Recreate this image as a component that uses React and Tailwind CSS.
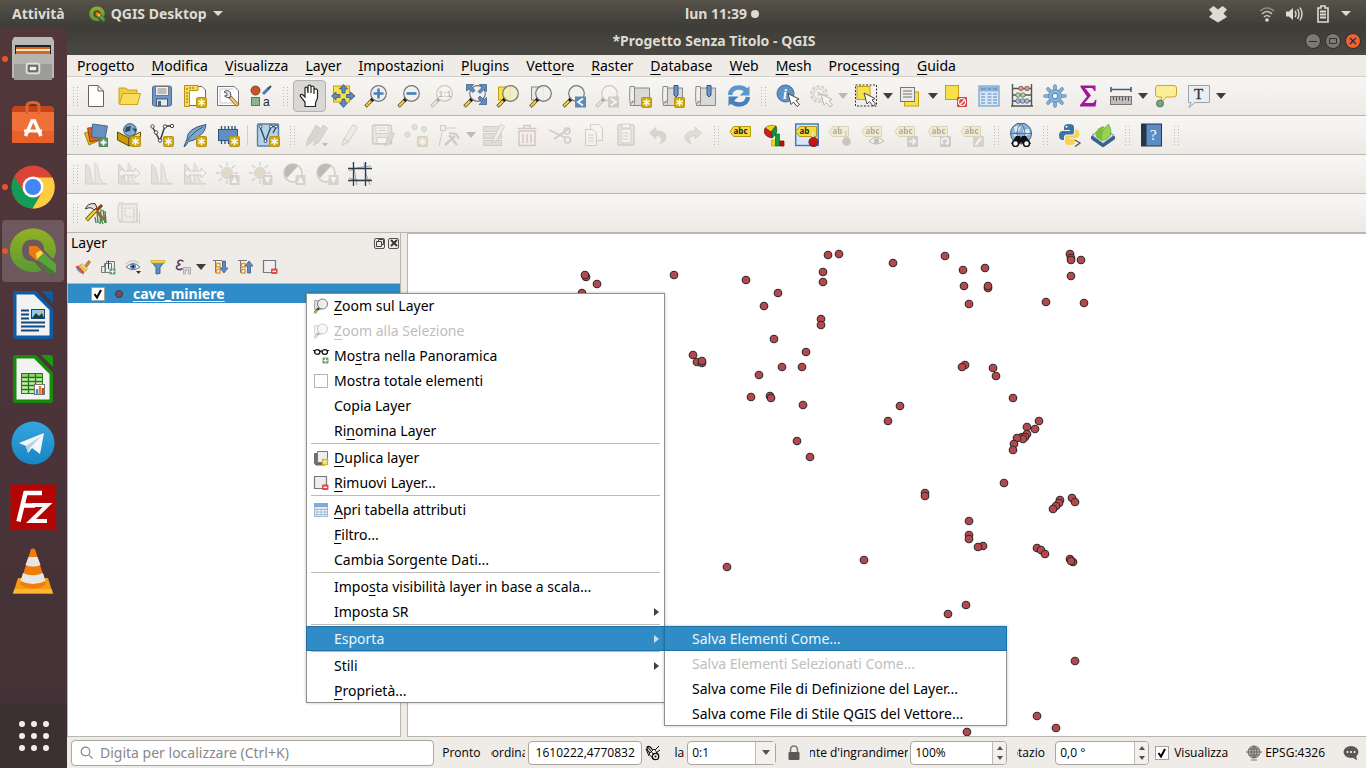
import React from "react";

/* ---------- shared pieces ---------- */

// "&" marks the mnemonic letter that follows it
function Mnemonic({ text }) {
  const i = text.indexOf("&");
  if (i < 0) return <span>{text}</span>;
  return (
    <span>
      {text.slice(0, i)}
      <span className="underline decoration-1 underline-offset-3">{text[i + 1]}</span>
      {text.slice(i + 2)}
    </span>
  );
}

function Svg({ children, className = "size-6", box = "0 0 24 24" }) {
  return (
    <svg viewBox={box} className={className} fill="none" aria-hidden="true">
      {children}
    </svg>
  );
}

const NewBadge = () => (
  <g>
    <rect x="13.500" y="13.500" width="10" height="10" rx="1" fill="#cfa914" stroke="#bb960c" />
    <path d="M18.500 14.800v7.400M15.300 16.600l6.400 3.800M21.700 16.600l-6.400 3.800" stroke="#fffbe6" strokeWidth="1.500" />
  </g>
);

const Lens = ({ fill = "#eef0f0", children }) => (
  <g>
    <path d="M8.500 15.500 1.500 22.500" stroke="#5a4a10" strokeWidth="3.400" />
    <path d="M7 17 2 22" stroke="#f7cf46" strokeWidth="2" />
    <path d="M9.500 14.500 7.500 16.500" stroke="#111" strokeWidth="3.400" />
    <circle cx="14.500" cy="9.500" r="7.800" fill={fill} fillOpacity=".9" stroke="#777" strokeWidth="1.200" />
    {children}
  </g>
);

const Cursor = ({ x = 0, y = 0 }) => (
  <path
    transform={`translate(${x} ${y})`}
    d="M0 0 3 11 5.500 8.500 9 13 11.500 11 8 7 11 5.500Z"
    fill="#fff"
    stroke="#444"
    strokeWidth="1"
  />
);

const Tag = ({ text = "abc", short }) => (
  <g>
    <path d={short ? "M1 8.500 4.500 3.500H20.500V13.500H4.500Z" : "M1 8.500 4.500 3.500H21.500V13.500H4.500Z"} fill="#f5dc3c" stroke="#b79a12" />
    <text x="4.500" y="11.300" fontSize="8" fontWeight="700" fontFamily="Open Sans, sans-serif" fill="#222">
      {text}
    </text>
  </g>
);

const Histogram = ({ arrows }) => (
  <g>
    <path d="M1.500 22V2Q6 3 7 13T12 22Z" fill="#bbb" stroke="#999" />
    <path d="M11 22V1Q14 2 15 12T23 22Z" fill="#ccc" stroke="#999" />
    {arrows && <path d="M1 11l5-5v3h12V6l5 5-5 5v-3H6v3Z" fill="#eee" stroke="#888" />}
  </g>
);

const UpDown = ({ down }) => (
  <g>
    <rect x="13.500" y="13" width="10" height="10" rx="1" fill="#999" />
    <path d={down ? "M18.500 21.500 15.500 15h6Z" : "M18.500 14.500 15.500 21h6Z"} fill="#fff" />
  </g>
);

const Scroll = () => (
  <g>
    <path d="M6 4h15.500v17.500H4Z" fill="#d9d9d9" stroke="#8a8a8a" />
    <path d="M2 2.500H6.500V17Q2.500 17 2.500 21.500 1 15 2 2.500ZM2.500 21.500H6L6.500 17" fill="#efefef" stroke="#8a8a8a" />
  </g>
);

const Sun = () => (
  <g>
    <path d="M11 0v4M11 18v4M0 11h4M18 11h4M3 3l3 3M16 16l3 3M19 3l-3 3M3 19l3-3" stroke="#999" strokeWidth="1.500" />
    <circle cx="11" cy="11" r="5.500" fill="#c9a860" stroke="#999" />
  </g>
);

const ic = {
  newDoc: (
    <path d="M4.500 1.500H14l5.500 5.500V22.500H4.500ZM14 1.500V7h5.500" fill="#fff" stroke="#666" />
  ),
  open: (
    <g stroke="#c9a51c">
      <path d="M2 20V4h7l2 2h9v4" fill="#f0cc45" />
      <path d="M2.500 20.500 5.500 9.500H23.500L20.500 20.500Z" fill="#f9dc5c" />
    </g>
  ),
  save: (
    <g>
      <rect x="2.500" y="2" width="19" height="20" rx="2" fill="#6d97c6" stroke="#4a6c95" />
      <rect x="5.500" y="2.500" width="13" height="9" fill="#f1f1f1" stroke="#777" />
      <path d="M7.500 5h9M7.500 7h9M7.500 9h9" stroke="#888" />
      <rect x="6.500" y="15" width="11" height="7" fill="#e9e9e9" stroke="#555" />
      <rect x="8" y="17" width="3" height="5" fill="#3f6595" />
    </g>
  ),
  newLayout: (
    <g>
      <path d="M6.500 2.500H19l3.500 3.500V21.500H6.500Z" fill="#fff" stroke="#666" />
      <path d="M1.500 1.500H15v5H6.500V22.500H1.500Z" fill="#f7dc5a" stroke="#b79414" />
      <path d="M4 4v2M7 3v2M10 3v2M3 9h2M3 12h2M3 15h2M3 18h2" stroke="#8a6d0a" />
      <NewBadge />
    </g>
  ),
  layoutMgr: (
    <g>
      <path d="M1.500 2.500H18l4.500 4V21.500H1.500Z" fill="#fff" stroke="#777" />
      <path d="M4 5h13M4 5v14h14" stroke="#b9c9d8" />
      <path d="M14 13 22 21.500" stroke="#8d6c22" strokeWidth="4" />
      <path d="M14.500 13.500 21.500 21" stroke="#f0c968" strokeWidth="2.400" />
      <path d="M8 8Q11 5 14.500 8.500 15.500 11 14 13.500 11 14.500 8.500 12L11 11.500 11 9.500Z" fill="#e5e5e5" stroke="#555" />
    </g>
  ),
  style: (
    <g>
      <circle cx="6.500" cy="6.500" r="4.500" fill="#c9562b" stroke="#8c3c1e" />
      <path d="M14 10 20 4" stroke="#4a7cae" strokeWidth="3" />
      <path d="M19 5 22 2" stroke="#2f4e6e" strokeWidth="2" />
      <rect x="2.500" y="13.500" width="8" height="8" fill="#8cb58b" stroke="#557f55" />
      <text x="14" y="22" fontSize="12" fontFamily="Liberation Sans, sans-serif" fill="#222">a</text>
    </g>
  ),
  hand: (
    <path
      d="M7 22.500V18L2.500 12.500Q1.500 10 4.500 10.500L7 13V4Q7.500 2 9.500 4L10 9V2Q11.500 0 13 2V9 3Q14.500 1 16 3V10 5.500Q18 4 19.500 6V14L17.500 19V22.500Z"
      fill="#fff"
      stroke="#222"
      strokeWidth="1.200"
    />
  ),
  panSel: (
    <g>
      <rect x="2.500" y="2" width="16" height="16" fill="#f8e04c" stroke="#c2a20e" />
      <g fill="#5d8cc0" stroke="#33577f" strokeWidth=".8">
        <path d="M12.500 0.500 16.500 5H14V9H11V5H8.500Z" />
        <path d="M12.500 23.500 16.500 19H14V15H11V19H8.500Z" />
        <path d="M0.500 12 5 8V10.500H9V13.500H5V16Z" />
        <path d="M24 12 19.500 8V10.500H15.500V13.500H19.500V16Z" />
      </g>
    </g>
  ),
  zoomIn: (
    <Lens>
      <path d="M14.500 4.500v10M9.500 9.500h10" stroke="#4a80b8" strokeWidth="2.600" />
    </Lens>
  ),
  zoomOut: (
    <Lens>
      <path d="M9.500 9.500h10" stroke="#4a80b8" strokeWidth="2.600" />
    </Lens>
  ),
  zoom11: (
    <Lens>
      <text x="8.500" y="13" fontSize="9" fontWeight="700" fontFamily="Liberation Sans, sans-serif" fill="#555">1:1</text>
    </Lens>
  ),
  zoomFull: (
    <g>
      <Lens />
      <path d="M3.500 0.500h7L8.500 2.500 12 6.500 10 8.500 6 5 3.500 7ZM23.500 0.500v7l-2.500-2-4 4-2-2 4-4-2.500-3ZM23.500 20.500h-7.500l2.500-2L15 14l2-2 4 4 2.500-2.500Z" fill="#5d8cc0" stroke="#33577f" strokeWidth=".7" />
    </g>
  ),
  zoomSel: (
    <g>
      <rect x="2.500" y="3" width="12" height="13" fill="#f8e04c" stroke="#c2a20e" />
      <Lens fill="#f1ecc4" />
    </g>
  ),
  zoomLayer: (
    <g>
      <rect x="2.500" y="3" width="12" height="13" fill="#e9e9e9" stroke="#888" />
      <Lens />
    </g>
  ),
  zoomLast: (
    <g>
      <Lens />
      <rect x="13" y="12.500" width="11" height="11" fill="#5c88b9" />
      <path d="M21 14.500 16 18l5 3.500" stroke="#fff" strokeWidth="1.800" />
    </g>
  ),
  zoomNext: (
    <g>
      <Lens />
      <rect x="13" y="12.500" width="11" height="11" fill="#888" />
      <path d="M16 14.500 21 18l-5 3.500" stroke="#fff" strokeWidth="1.800" />
    </g>
  ),
  newMap: (<g><Scroll /><NewBadge /></g>),
  newBookmark: (
    <g><Scroll /><path d="M13 1.500h4V11l-2 2-2-2Z" fill="#6b98c8" stroke="#2f5478" /><NewBadge /></g>
  ),
  bookmarks: (
    <g><Scroll /><path d="M13 1.500h4V11l-2 2-2-2Z" fill="#6b98c8" stroke="#2f5478" /></g>
  ),
  refresh: (
    <g>
      <path d="M3 11Q4 3.500 12 3.500 17 3.500 19.500 7" stroke="#5b96cc" strokeWidth="4.500" />
      <path d="M22.500 2V11.500H12.500Z" fill="#5b96cc" />
      <path d="M21 13Q20 20.500 12 20.500 7 20.500 4.500 17" stroke="#4482bb" strokeWidth="4.500" />
      <path d="M1.500 22V12.500H11.500Z" fill="#4482bb" />
    </g>
  ),
  identify: (
    <g>
      <circle cx="9.500" cy="9.500" r="8.500" fill="#5e93c8" stroke="#3f6f9f" />
      <text x="7" y="14.500" fontSize="14" fontStyle="italic" fontWeight="700" fontFamily="Liberation Serif, serif" fill="#fff">i</text>
      <Cursor x={12} y={9.500} />
    </g>
  ),
  action: (
    <g>
      <circle cx="10" cy="10" r="8" fill="#ccc" stroke="#888" strokeWidth="2" strokeDasharray="3 2" />
      <circle cx="10" cy="10" r="5" fill="#eee" stroke="#888" />
      <path d="M8.500 7v6l5-3Z" fill="#888" />
      <Cursor x={12} y={10} />
    </g>
  ),
  select: (
    <g>
      <rect x="1.500" y="1" width="21" height="21" stroke="#333" strokeDasharray="2 1.500" fill="none" />
      <rect x="3" y="2.500" width="13" height="13" fill="#f8e04c" stroke="#c2a20e" />
      <Cursor x={10} y={9} />
    </g>
  ),
  selectValue: (
    <g>
      <rect x="5.500" y="8" width="14" height="14" fill="#f8e04c" stroke="#c2a20e" />
      <rect x="1.500" y="3.500" width="14" height="14" fill="#ecebea" stroke="#777" />
      <path d="M4 7h9M4 10h9M4 13h9" stroke="#777" strokeWidth="1.200" />
    </g>
  ),
  deselect: (
    <g>
      <rect x="1.500" y="1.500" width="13" height="14" fill="#f8e04c" stroke="#c2a20e" />
      <rect x="13" y="13" width="10" height="10" rx="1" fill="#dd4340" />
      <circle cx="18" cy="18" r="3.500" stroke="#fff" strokeWidth="1.200" />
      <path d="M16 20.500 20.500 16" stroke="#fff" strokeWidth="1.200" />
    </g>
  ),
  table: (
    <g>
      <rect x="2" y="2" width="20" height="20" fill="#d8e8f6" stroke="#5e8fbf" />
      <rect x="2.500" y="2.500" width="19" height="5" fill="#8cb6dd" />
      <path d="M4 5h5M11 5h3M16 5h4M4 10h4M10.500 10h4M16 10h4M4 13h4M10.500 13h4M16 13h4M4 16h4M10.500 16h4M16 16h4M4 19h4M10.500 19h4M16 19h4" stroke="#5585b5" strokeWidth="1.200" />
    </g>
  ),
  abacus: (
    <g>
      <path d="M2.500 0v22M21.500 0v22M1 22h22M2 4.500h20M2 11h20M2 17h20" stroke="#555" strokeWidth="1.400" />
      <g stroke="#555" strokeWidth=".7">
        <circle cx="11" cy="4.500" r="2.300" fill="#ec8b86" /><circle cx="17" cy="4.500" r="2.300" fill="#ec8b86" />
        <circle cx="8" cy="11" r="2.300" fill="#a9d89c" /><circle cx="13" cy="11" r="2.300" fill="#a9d89c" />
        <circle cx="8" cy="17" r="2.300" fill="#9cc5e8" /><circle cx="12.500" cy="17" r="2.300" fill="#9cc5e8" /><circle cx="17" cy="17" r="2.300" fill="#9cc5e8" />
      </g>
    </g>
  ),
  gear: (
    <g>
      <path d="M12 2v20M2 12h20M5 5l14 14M19 5 5 19" stroke="#5b8fc0" strokeWidth="3.600" strokeLinecap="round" />
      <path d="M12 2v20M2 12h20M5 5l14 14M19 5 5 19" stroke="#84b2db" strokeWidth="2" strokeLinecap="round" />
      <circle cx="12" cy="12" r="6.500" fill="#84b2db" stroke="#5b8fc0" strokeWidth=".8" />
      <circle cx="12" cy="12" r="2.800" fill="#f3f1ee" stroke="#4b7eae" />
    </g>
  ),
  sigma: (
    <path d="M4.500 1.500H19.500V7H18Q17.500 4 15 4H9l6 7.500L8.500 19H16Q18.500 19 19 16h1.500L19.500 22.500H4V21L11 12.500 4.500 3Z" fill="#a5129c" />
  ),
  ruler: (
    <g>
      <path d="M2 5.500H22M2 3v5M22 3v5" stroke="#345f80" strokeWidth="1.600" />
      <rect x="1.500" y="12.500" width="21" height="8" fill="#bcbcbc" stroke="#777" />
      <path d="M4.500 13v3M7.500 13v4M10.500 13v3M13.500 13v4M16.500 13v3M19.500 13v4" stroke="#555" />
    </g>
  ),
  mapTip: (
    <g>
      <path d="M4 1.500H20Q22.500 1.500 22.500 4V10Q22.500 13 20 13H12L7 19 7.500 13H4Q1.500 13 1.500 10V4Q1.500 1.500 4 1.500Z" fill="#fcee97" stroke="#c9a82e" />
      <circle cx="6" cy="19.500" r="3.500" fill="#7fa382" stroke="#55765a" />
    </g>
  ),
  textNote: (
    <g>
      <path d="M1.500 1.500H22.500V18.500H8L2 23.500 4 18.500H1.500Z" fill="#e8eef2" stroke="#9aa3aa" />
      <text x="7" y="15" fontSize="15" fontFamily="Liberation Serif, serif" fill="#333" stroke="#333" strokeWidth=".3">T</text>
    </g>
  ),
  dataSource: (
    <g strokeWidth=".8">
      <path d="M0.500 10 10 7l4 11-9 4Z" fill="#e8b520" stroke="#8f6c05" />
      <path d="M3.500 5 15 4l1 13-10 2Z" fill="#d9631d" stroke="#843608" />
      <path d="M8.500 1 23.500 3 21 16 7.500 14Z" fill="#6690c0" stroke="#37597f" />
      <rect x="15" y="15" width="9" height="9" rx="1" fill="#5b9461" stroke="#457a4b" />
      <path d="M19.500 16.500v6M16.500 19.500h6" stroke="#fff" strokeWidth="1.800" />
    </g>
  ),
  box: (
    <g>
      <circle cx="13" cy="7" r="6.300" fill="#86aacd" stroke="#2f4f72" />
      <path d="M9 4l5-1-1 5-5 1ZM15 5l4 1v4Z" fill="#24486e" />
      <path d="M0.500 9 12 15V23L0.500 17Z" fill="#c79c05" stroke="#5f4a00" />
      <path d="M12 15 23.500 9V17L12 23Z" fill="#f7e06a" stroke="#5f4a00" />
      <NewBadge />
    </g>
  ),
  shape: (
    <g>
      <path d="M2 3 10 18 15 3H22" stroke="#333" strokeWidth="1.400" />
      <g fill="#fff" stroke="#444">
        <circle cx="2.500" cy="3.500" r="1.700" /><circle cx="6" cy="9.500" r="1.700" /><circle cx="10" cy="17.500" r="1.700" /><circle cx="15" cy="3.500" r="1.700" /><circle cx="22" cy="3" r="1.700" />
      </g>
      <NewBadge />
    </g>
  ),
  feather: (
    <g>
      <path d="M1 23.500 4 16Q4 5 23 1.500 22 9 17.500 12 12 18 5.500 18.500L2 23.500Z" fill="#7da6cd" stroke="#35597c" />
      <path d="M4.500 17.500Q10 9 20 4" stroke="#35597c" />
      <NewBadge />
    </g>
  ),
  chip: (
    <g>
      <path d="M5.500 3v18M9 3v18M12.500 3v18M16 3v18M19 3v18" stroke="#2f4d6e" strokeWidth="1.300" />
      <rect x="2.500" y="6.500" width="19" height="11" fill="#5f8fc3" stroke="#2e5580" />
      <NewBadge />
    </g>
  ),
  virtual: (
    <g>
      <rect x="1.500" y="1" width="21" height="22" rx="1" fill="#b7d2e8" stroke="#5d7f9e" strokeWidth="1.400" />
      <path d="M4 3.500 9.500 18.500 15 3.500H20.500L17 10" stroke="#2c4c6c" strokeWidth="1.400" />
      <g fill="#fff" stroke="#2c4c6c"><circle cx="4.500" cy="3.500" r="1.500" /><circle cx="9.500" cy="18" r="1.500" /><circle cx="15" cy="3.500" r="1.500" /><circle cx="20" cy="3.500" r="1.500" /></g>
      <NewBadge />
    </g>
  ),
  pencils: (
    <g>
      <path d="M1.500 22.500 3 16 11 2 15 5 7 19Z" fill="#a99" stroke="#888" />
      <path d="M8.500 22.500 10 16 18 2 22.500 5 14 19Z" fill="#a8a4a0" stroke="#888" />
      <path d="M17 20h6l-3 3.500Z" fill="#555" />
    </g>
  ),
  pencil: (
    <path d="M4 22.500 6 16 15 1.500 19.500 4.500 10.500 19ZM6 16l4.500 3" fill="#ddd8d0" stroke="#888" />
  ),
  saveEdits: (
    <g>
      <rect x="1.500" y="2" width="19" height="19" rx="2" fill="#ccc" stroke="#888" strokeWidth="1.500" />
      <rect x="5" y="2.500" width="12" height="8" fill="#f4f4f4" stroke="#888" />
      <rect x="6" y="14.500" width="10" height="6" fill="#f4f4f4" stroke="#888" />
      <path d="M7 5h8M7 7.500h8" stroke="#888" />
      <path d="M14 23 15 19 20 9 23.500 11 18 21Z" fill="#b7a7a4" stroke="#888" />
    </g>
  ),
  addPoint: (
    <g>
      <g fill="#bbb" stroke="#888"><circle cx="3.500" cy="11.500" r="2.500" /><circle cx="10.500" cy="4" r="2.500" /><circle cx="20" cy="6" r="2.500" /></g>
      <NewBadge />
    </g>
  ),
  vertex: (
    <g stroke="#888">
      <path d="M2 23 6 5H19" />
      <rect x="3.500" y="2.500" width="5" height="5" fill="#ddd" />
      <path d="M8 22 18 13M12 12 20 22" strokeWidth="2.500" />
      <path d="M12 10l7 1 3 5" strokeWidth="2" />
    </g>
  ),
  multiEdit: (
    <g>
      <path d="M1.500 3.500h18v5h-18ZM1.500 10.500h18v5h-18ZM1.500 17.500h18v5h-18Z" fill="#b9b7ac" stroke="#888" />
      <path d="M10 20 12 14 19 1 22.500 3.500 15 17Z" fill="#ddd" stroke="#888" />
    </g>
  ),
  trash: (
    <g stroke="#a97070" strokeWidth="1.500">
      <path d="M4 8h16v14.500H4ZM2.500 5.500h19M9 5V2.500h6V5" />
      <path d="M8 11v9M12 11v9M16 11v9" />
    </g>
  ),
  cut: (
    <g stroke="#888" strokeWidth="1.600">
      <path d="M1 7 17 14.500M6 16 22 5" /><circle cx="19" cy="8" r="3" /><circle cx="19.500" cy="17" r="3" />
    </g>
  ),
  copy: (
    <g fill="#eee" stroke="#888">
      <path d="M9.500 1.500H18l3.500 3.500V17.500H9.500Z" />
      <path d="M4.500 6.500H12l3.500 3.500V22.500H4.500ZM7 12h6M7 15h6M7 18h6" />
    </g>
  ),
  paste: (
    <g fill="#eee" stroke="#888">
      <rect x="4" y="2" width="16" height="20" rx="1" fill="#ccc" strokeWidth="1.400" />
      <path d="M7 6h10v14H7ZM8.500 10h6M8.500 13h6M8.500 16h6" />
      <rect x="8" y="1" width="8" height="4" />
    </g>
  ),
  undo: (
    <path d="M2.500 10 9 4V8Q18 7.500 19 13.500 19 19 13 20.500 16 16 13.500 14 11.500 12.500 9 12.500V16Z" fill="#b3948e" stroke="#999" />
  ),
  redo: (
    <path d="M21.500 10 15 4V8Q6 7.500 5 13.500 5 19 11 20.500 8 16 10.500 14 12.500 12.500 15 12.500V16Z" fill="#a9b3a3" stroke="#999" />
  ),
  label: <Tag />,
  pie: (
    <g strokeWidth=".7">
      <path d="M9 9 3 5Q7 1 14 3Z" fill="#f7d20f" stroke="#8c6e00" />
      <path d="M9 9 14 3Q17 10 10 15Z" fill="#1d8c3c" stroke="#0d4e1e" />
      <path d="M9 9 10 15Q0 13 3 5Z" fill="#d32020" stroke="#701010" />
      <path d="M9.500 17h4v6h-4Z" fill="#f7d20f" stroke="#c93" /><path d="M13.500 11h4v12h-4Z" fill="#0b9c38" stroke="#064" /><path d="M18 18h4v5h-4Z" fill="#c01414" stroke="#600" />
    </g>
  ),
  pinLabel: (
    <g>
      <rect x="0.700" y="1" width="22.500" height="21.500" fill="#d7e5f4" stroke="#2a7cd2" strokeWidth="1.400" />
      <Tag text="ab" />
      <path d="M18 9v8" stroke="#ddd" strokeWidth="2" />
      <circle cx="18.500" cy="19" r="4.500" fill="#c21717" stroke="#7b0d0d" />
    </g>
  ),
  labelPin: (
    <g><Tag text="ab" short /><path d="M18 8v8" stroke="#999" strokeWidth="2" /><circle cx="18.500" cy="18.500" r="4" fill="#9a6a6a" stroke="#888" /></g>
  ),
  labelEye: (
    <g><Tag short /><path d="M8 18Q15 11 23 18 15 24 8 18Z" fill="#eee" stroke="#555" /><circle cx="15.500" cy="18" r="2.500" fill="#666" /></g>
  ),
  labelMove: (
    <g><Tag short /><rect x="13" y="13" width="11" height="11" rx="1" fill="#888" /><path d="M14.500 18.500h7M18.500 15.500l3 3-3 3" stroke="#fff" strokeWidth="1.600" /></g>
  ),
  labelRotate: (
    <g><Tag short /><rect x="13" y="13" width="11" height="11" rx="1" fill="#888" /><path d="M16 21a3.300 3.300 0 1 1 4 0l-1.500-1.500" stroke="#fff" strokeWidth="1.600" /></g>
  ),
  labelEdit: (
    <g><Tag short /><rect x="13" y="13" width="11" height="11" rx="1" fill="#a39c80" /><path d="M15.500 22 21 15" stroke="#fff" strokeWidth="2" /></g>
  ),
  metaSearch: (
    <g>
      <circle cx="12" cy="10.500" r="10.500" fill="#8db4d8" stroke="#3b5d80" />
      <path d="M5 4Q9 2 12 4L10 8 6 9ZM14 7l6-1 1 5-5 2ZM4 11l5 1-1 4Z" fill="#dceaf5" />
      <path d="M1 10.500h22M12 0Q4 10 12 21M12 0Q20 10 12 21" stroke="#3f658c" strokeWidth=".8" />
      <path d="M7 13h4l1 2 1-2h4l5 8H14l-2-2-2 2H2Z" fill="#111" />
      <circle cx="6.500" cy="20.500" r="3" fill="#fff" stroke="#111" strokeWidth="1.500" /><circle cx="17.500" cy="20.500" r="3" fill="#fff" stroke="#111" strokeWidth="1.500" />
    </g>
  ),
  python: (
    <g>
      <path d="M11 1Q6 1 6 4V7H12V8H4Q1 8.500 1 12.500T4 17H6V14Q6 11.500 9 11.500H14Q16 11.500 16 9V4Q16 1 11 1Z" fill="#3d74a5" />
      <path d="M11.500 22Q17 22 17 19V16H11V15H18.500Q21.500 14.500 21.500 11T18.500 6.500H17V9.500Q17 12.500 14 12.500H9Q7 12.500 7 15V19Q7 22 11.500 22Z" fill="#fbd348" />
      <circle cx="8.500" cy="3.700" r="1" fill="#fff" />
      <path d="M17 17l5 3-5 3.500" stroke="#555" strokeWidth="1.300" />
    </g>
  ),
  leaf: (
    <g>
      <path d="M0.500 13.500 12 5 23.500 13.500V16L12 24 0.500 16Z" fill="#3b6288" stroke="#24425f" strokeWidth=".7" />
      <path d="M1 12.500 12 4 23 12.500 12 20.500Z" fill="#d3dfea" stroke="#4d7498" strokeWidth=".8" />
      <path d="M10.500 17.500Q3 15 5 9 7 4.500 12.500 3 13 10 10.500 17.500Z" fill="#7dbd3c" />
      <path d="M10.500 17.500Q9 8 17.500 1 21 7 19.500 12 16.500 17 10.500 17.500Z" fill="#9ad255" stroke="#6cab2f" strokeWidth=".7" />
    </g>
  ),
  help: (
    <g>
      <rect x="1.500" y="1" width="20" height="22" fill="#5c8cc2" stroke="#24364a" />
      <rect x="1.500" y="1" width="5" height="22" fill="#25364a" />
      <text x="10" y="17" fontSize="15" fontFamily="Liberation Serif, serif" fill="#fff">?</text>
    </g>
  ),
  hist: <Histogram />,
  histArrows: <Histogram arrows />,
  brightUp: (<g><Sun /><UpDown /></g>),
  brightDown: (<g><Sun /><UpDown down /></g>),
  contrastUp: (
    <g><circle cx="11" cy="11" r="9" fill="#eee" stroke="#888" strokeWidth="1.500" /><path d="M5 16 16 4A8 8 0 0 0 5 16Z" fill="#555" /><UpDown /></g>
  ),
  contrastDown: (
    <g><circle cx="11" cy="11" r="9" fill="#eee" stroke="#888" strokeWidth="1.500" /><path d="M5 16 16 4A8 8 0 0 0 5 16Z" fill="#555" /><UpDown down /></g>
  ),
  grid: (
    <g>
      <path d="M1 9Q8 5 23 4M1 16Q12 20 23 17M5 1 9 23M16 1Q17 12 22 23" stroke="#7fa8cf" />
      <path d="M5.500 0V24M17.500 0V24M0 6.500H24M0 18.500H24" stroke="#3a3a3a" strokeWidth="1.300" />
    </g>
  ),
  hammer: (
    <g>
      <path d="M13 10 14 22M17 8 16 23M19 9 21 22M15 14l4 9M11 16l1 6M21 10l1 12" stroke="#3f8a52" strokeWidth="1.400" />
      <path d="M9 5 20 19" stroke="#a3652f" strokeWidth="3" />
      <path d="M2.500 19 12 9" stroke="#7a6010" strokeWidth="4" />
      <path d="M3 18.500 12 9" stroke="#f0d33b" strokeWidth="2.200" />
      <path d="M1.500 8Q3 2 11 2.500L13 6.500 10 9Q7 5 1.500 8Z" fill="#ddd" stroke="#333" />
      <path d="M13 9 18 4" stroke="#8b3b12" strokeWidth="3" />
    </g>
  ),
  mapHammer: (
    <g>
      <path d="M2 2h3v18H2Q0 12 2 2M5 3h15v18H4Q2 21 2 20" fill="#ddd" stroke="#999" strokeWidth="1.300" />
      <path d="M8 7h9v9H8Z" stroke="#777" strokeDasharray="2 1.500" />
      <path d="M17 8v14M20 7v15M22.500 10v13" stroke="#999" />
    </g>
  ),
};

function Handle({ className = "w-4" }) {
  return (
    <span className={`flex shrink-0 justify-center ${className}`}>
      <svg className="h-5 w-[5px]" viewBox="0 0 5 20" aria-hidden="true">
        <path d="M.5 1V20M4.500 1V20" stroke="#bcb8b2" strokeDasharray="1 2" />
      </svg>
    </span>
  );
}

function Tool({ name, icon, off, pressed }) {
  return (
    <button
      type="button"
      aria-label={name}
      disabled={off}
      className={`flex h-8 w-[33px] shrink-0 items-center justify-center rounded-sm ${
        pressed ? "border border-[#b5b2ae] bg-[#dad8d5]" : ""
      }`}
    >
      <Svg className={off ? "size-6 opacity-35 sepia-20 grayscale-50" : "size-6"}>{ic[icon]}</Svg>
    </button>
  );
}

function Drop({ off, name = "Altre opzioni" }) {
  return (
    <button type="button" aria-label={name} disabled={off} className="flex h-8 w-3 shrink-0 items-center justify-center">
      <svg viewBox="0 0 10 6" className={off ? "h-1.5 w-2.5 opacity-30" : "h-1.5 w-2.5"} aria-hidden="true">
        <path d="M0 0h10L5 6Z" fill="#3f3e3b" />
      </svg>
    </button>
  );
}

// entry: "|" handle, "v" drop arrow, "v-" disabled drop arrow, "/" separator, or [icon, name, flag]
function Toolbar({ items, label }) {
  return (
    <div
      role="toolbar"
      aria-label={label}
      className="flex h-[39px] shrink-0 items-center overflow-hidden border-b border-[#b9b5b0] bg-linear-to-b from-[#f8f6f3] to-[#edeae6]"
    >
      <Handle className="w-3 pl-1" />
      {items.map((it, i) => {
        if (it === "|") return <Handle key={i} />;
        if (it === "v") return <Drop key={i} />;
        if (it === "v-") return <Drop key={i} off />;
        if (it === "/") return <span key={i} className="mx-[3px] h-5 w-px shrink-0 bg-[#d2cfca]" />;
        return <Tool key={i} icon={it[0]} name={it[1]} off={it[2] === "off"} pressed={it[2] === "on"} />;
      })}
    </div>
  );
}

const mainBar = [
  ["newDoc", "Nuovo progetto"], ["open", "Apri"], ["save", "Salva"], ["newLayout", "Nuovo layout"],
  ["layoutMgr", "Gestore layout"], ["style", "Gestore stili"], "|",
  ["hand", "Sposta mappa", "on"], ["panSel", "Sposta alla selezione"], ["zoomIn", "Ingrandisci"], ["zoomOut", "Rimpicciolisci"],
  ["zoom11", "Zoom 1:1", "off"], ["zoomFull", "Zoom completo"], ["zoomSel", "Zoom selezione"], ["zoomLayer", "Zoom layer"],
  ["zoomLast", "Zoom precedente"], ["zoomNext", "Zoom successivo", "off"], ["newMap", "Nuova vista mappa"],
  ["newBookmark", "Nuovo segnalibro"], ["bookmarks", "Segnalibri"], ["refresh", "Aggiorna"], "|",
  ["identify", "Informazioni elementi"], ["action", "Esegui azione", "off"], "v-", ["select", "Seleziona elementi"], "v",
  ["selectValue", "Seleziona per valore"], "v", ["deselect", "Deseleziona"], ["table", "Tabella attributi"],
  ["abacus", "Calcolatore campi"], ["gear", "Strumenti"], ["sigma", "Riassunto statistico"], ["ruler", "Misura"], "v",
  ["mapTip", "Suggerimenti mappa"], ["textNote", "Annotazione"], "v",
];

const editBar = [
  ["dataSource", "Gestore sorgenti dati"], ["box", "Nuovo GeoPackage"], ["shape", "Nuovo shapefile"], ["feather", "Nuovo SpatiaLite"],
  ["chip", "Nuovo layer temporaneo"], "/", ["virtual", "Nuovo layer virtuale"], "|",
  ["pencils", "Modifiche attuali", "off"], ["pencil", "Attiva modifiche", "off"], ["saveEdits", "Salva modifiche", "off"],
  ["addPoint", "Aggiungi punto", "off"], ["vertex", "Strumento vertici", "off"], "v-", ["multiEdit", "Modifica attributi", "off"],
  ["trash", "Elimina", "off"], ["cut", "Taglia", "off"], ["copy", "Copia", "off"], ["paste", "Incolla", "off"],
  ["undo", "Annulla", "off"], ["redo", "Ripeti", "off"], "|",
  ["label", "Etichette"], ["pie", "Diagrammi"], ["pinLabel", "Evidenzia etichette"], ["labelPin", "Blocca etichette", "off"],
  ["labelEye", "Mostra etichette", "off"], ["labelMove", "Sposta etichetta", "off"], ["labelRotate", "Ruota etichetta", "off"],
  ["labelEdit", "Cambia etichetta", "off"], "|", ["metaSearch", "MetaSearch"], "|", ["python", "Console Python"],
  ["leaf", "Plugin"], "|", ["help", "Guida"], "|",
];

const rasterBar = [
  ["hist", "Stira istogramma locale", "off"], ["histArrows", "Stira istogramma", "off"], ["hist", "Taglio cumulativo locale", "off"],
  ["histArrows", "Taglio cumulativo", "off"], ["brightUp", "Aumenta luminosità", "off"], ["brightDown", "Riduci luminosità", "off"],
  ["contrastUp", "Aumenta contrasto", "off"], ["contrastDown", "Riduci contrasto", "off"], ["grid", "Georeferenziatore"],
];

const grassBar = [["hammer", "Strumenti GRASS"], ["mapHammer", "Regione GRASS", "off"]];

const menus = [
  "P&rogetto", "&Modifica", "&Visualizza", "&Layer", "&Impostazioni", "&Plugins", "Vett&ore",
  "&Raster", "&Database", "&Web", "&Mesh", "Pro&cessing", "&Guida",
];

/* ---------- desktop chrome ---------- */

const QLogo = ({ className }) => (
  <Svg box="0 0 48 48" className={className}>
    <defs>
      <linearGradient id="qg" x1="0" y1="0" x2="0" y2="1">
        <stop offset="0" stopColor="#93b023" />
        <stop offset="1" stopColor="#5a9a33" />
      </linearGradient>
    </defs>
    <path d="M24 1.500C11 1.500 1 11 1 23.500S11 45 24 45Q29 45 33 43.500L25 34.500Q13 35 13 23.500 13 12.500 24 12.500T35 23L44 32Q47 28 47 23.500C47 11 37 1.500 24 1.500Z" fill="url(#qg)" />
    <path d="M20 19 28 19 36 27 28 34 20 27Z" fill="#ee7913" />
    <path d="M27 26 31.500 23.500 34 26 28 33Z" fill="#f9e04a" />
    <path d="M28 32 35 26 47 37V46H40Z" fill="#5aa23a" />
    <path d="M28 32 40 46H47Z" fill="#3f7f2b" />
  </Svg>
);

const stampEdge = [3, 10, 17, 24, 31, 38];

const dockIcons = [
  {
    name: "File", dot: true,
    art: (
      <Svg box="0 0 44 44" className="size-11">
        <path d="M3 0H41L43 4V41H1V4Z" fill="#b9b9b7" />
        <rect x="4" y="8" width="36" height="12" fill="#222" />
        <rect x="5" y="10" width="34" height="8" fill="#d9661e" />
        <rect x="5" y="12" width="34" height="2" fill="#fbe3c8" />
        <path d="M3 17H41V43H3Z" fill="#9c9c9a" />
        <path d="M3 17H41V27H3Z" fill="#b4b4b2" />
        <rect x="15.500" y="26.500" width="13" height="10" rx="2" fill="#a5a5a3" stroke="#e3e3e1" strokeWidth="1.500" />
        <rect x="18" y="29" width="8" height="5" fill="#efefef" stroke="#444" strokeWidth="1.200" />
      </Svg>
    ),
  },
  {
    name: "Ubuntu Software",
    art: (
      <Svg box="0 0 44 44" className="size-11">
        <path d="M1 8 4 5H40L43 8V42H1Z" fill="#ef7038" />
        <path d="M1 8 4 5H40L43 8V11H1Z" fill="#c64518" />
        <path d="M1 30H43V42H1Z" fill="#e8602a" />
        <path d="M16 13V5Q16 1.500 22 1.500T28 5V13" stroke="#e0622d" strokeWidth="3" />
        <path d="M14.500 35 21 20H23.500L30 35" stroke="#fff" strokeWidth="3.500" />
        <path d="M13 30H31" stroke="#fff" strokeWidth="3" />
      </Svg>
    ),
  },
  {
    name: "Google Chrome", dot: true,
    art: (
      <Svg box="0 0 44 44" className="size-11">
        <circle cx="22" cy="22" r="21.500" fill="#db4437" />
        <path d="M3.500 11.500 13 27 22 32H29L22 43.500A21.500 21.500 0 0 1 3.500 11.500Z" fill="#0f9d58" />
        <path d="M22 12.500H41.500A21.500 21.500 0 0 1 21.500 43.500L31 27.500Z" fill="#ffcd40" />
        <circle cx="22" cy="22" r="10.500" fill="#fff" />
        <circle cx="22" cy="22" r="8" fill="#4285f4" />
      </Svg>
    ),
  },
  { name: "QGIS", dot: true, active: true, art: <QLogo className="size-12" /> },
  {
    name: "LibreOffice Writer",
    art: (
      <Svg box="0 0 40 48" className="h-12 w-10">
        <path d="M2 0H23L40 18V46Q40 48 38 48H2Q0 48 0 46V2Q0 0 2 0Z" fill="#0d5ca5" />
        <path d="M3.500 3.500H21L36.500 19V44.500H3.500Z" fill="#f2f2f2" />
        <path d="M28 0H38L40 2V12Z" fill="#0d5ca5" />
        <path d="M8 19.500H16M8 23.500H16M8 27.500H16M8 31.500H32M8 35.500H32M8 39.500H26" stroke="#0e4a80" strokeWidth="2" />
        <rect x="18.500" y="18.500" width="13" height="9" fill="#8ecbf2" stroke="#0e4a80" />
        <path d="M19 27 23 22 26 25 29 22 31 27Z" fill="#2d3b2d" /><circle cx="28.500" cy="20.800" r="1.500" fill="#f6b73c" />
      </Svg>
    ),
  },
  {
    name: "LibreOffice Calc",
    art: (
      <Svg box="0 0 40 48" className="h-12 w-10">
        <path d="M2 0H23L40 18V46Q40 48 38 48H2Q0 48 0 46V2Q0 0 2 0Z" fill="#178a0c" />
        <path d="M3.500 3.500H21L36.500 19V44.500H3.500Z" fill="#f2f2f2" />
        <path d="M28 0H38L40 2V12Z" fill="#1a9a0c" />
        <rect x="8.500" y="18.500" width="21" height="20" fill="#c9ebaf" stroke="#1f7c12" />
        <path d="M9 21H29" stroke="#8ed26a" strokeWidth="4" />
        <path d="M8 22.500H30M8 26.500H30M8 30.500H30M8 34.500H30M15.500 18V39M22.500 18V39" stroke="#1f7c12" strokeWidth="1.300" />
        <rect x="21.500" y="29.500" width="10" height="10" fill="#fff" stroke="#777" />
        <path d="M24 39V34" stroke="#3b8fd4" strokeWidth="2.400" /><path d="M27 39V31" stroke="#e67b22" strokeWidth="2.400" /><path d="M29.800 39V33" stroke="#a33a1a" strokeWidth="2" />
      </Svg>
    ),
  },
  {
    name: "Telegram",
    art: (
      <Svg box="0 0 44 44" className="size-11">
        <defs>
          <linearGradient id="tg" x1="0" y1="0" x2="0" y2="1">
            <stop offset="0" stopColor="#35a6e0" />
            <stop offset="1" stopColor="#1884c4" />
          </linearGradient>
        </defs>
        <circle cx="22" cy="22" r="21.500" fill="url(#tg)" />
        <path d="M8 22 33 12 29 33 21 27 17 32 15 25Z" fill="#f2f7fb" />
        <path d="M15 25 30 15 19 27 17 32Z" fill="#b9d0e0" />
      </Svg>
    ),
  },
  {
    name: "FileZilla",
    art: (
      <Svg box="0 0 48 48" className="size-12">
        <rect x="0.500" y="0.500" width="47" height="47" fill="#b40505" />
        {stampEdge.map((p) => (
          <g key={p} fill="#4a363b">
            <circle cx={p + 3.500} cy="0" r="2.200" /><circle cx={p + 3.500} cy="48" r="2.200" />
            <circle cx="0" cy={p + 3.500} r="2.200" /><circle cx="48" cy={p + 3.500} r="2.200" />
          </g>
        ))}
        <path d="M9.500 38.500 16.500 10H33M13.500 22.500H26" stroke="#fff" strokeWidth="4.500" />
        <path d="M23 22H38.500L22 38H38" stroke="#fff" strokeWidth="4" />
      </Svg>
    ),
  },
  {
    name: "VLC",
    art: (
      <Svg box="0 0 42 48" className="h-12 w-[42px]">
        <path d="M6 31H36L41 46.500H1Z" fill="#f59a12" />
        <path d="M2.500 42H39.500L41 46.500H1Z" fill="#ffb52e" />
        <path d="M19 2Q21 1 23 2L34 37Q21 46 8 37Z" fill="#f07c0a" />
        <path d="M16.500 10H25.500L28.500 18Q21 21 13.500 18ZM11 26Q21 30.500 31 26L33.500 34Q21 40 8.500 34Z" fill="#e6e6e6" />
      </Svg>
    ),
  },
];

function TopBar() {
  return (
    <header className="grid h-[27px] shrink-0 grid-cols-[1fr_auto_1fr] items-center bg-linear-to-b from-[#57534a] to-[#3d3c37] px-3 text-sm font-bold text-[#dfdbd2]">
      <div className="flex items-center gap-6">
        <button type="button">Attività</button>
        <button type="button" className="flex items-center gap-1.5">
          <QLogo className="size-4" />
          QGIS Desktop
          <svg viewBox="0 0 10 5" className="h-[5px] w-2.5" aria-hidden="true"><path d="M0 0h10L5 5Z" fill="#dfdbd2" /></svg>
        </button>
      </div>
      <button type="button" className="flex items-center gap-1 pl-[78px]">
        lun 11:39
        <span className="size-2 rounded-full bg-[#dfdbd2]" />
      </button>
      <div className="flex items-center justify-end pr-[3px]">
        <Svg box="0 0 20 18" className="mr-[30px] h-[18px] w-5">
          <path d="M5.500 1 10 4.500 14.500 1 19 4.500 15.500 8.500 19 12 10 17.500 1 12 4.500 8.500 1 4.500Z" fill="#dfdbd2" />
        </Svg>
        <Svg box="0 0 18 16" className="mr-[9px] h-4 w-[18px]">
          <path d="M2 5Q9 -1 16 5" stroke="#8b887f" strokeWidth="1.600" />
          <path d="M4 8Q9 3 14 8M6 11Q9 8 12 11" stroke="#c8c5bc" strokeWidth="1.600" />
          <circle cx="9" cy="14" r="1.800" fill="#dfdbd2" />
        </Svg>
        <Svg box="0 0 18 16" className="mr-3.5 h-4 w-[18px]">
          <path d="M1 5.500H4L8 2V14L4 10.500H1Z" fill="#dfdbd2" />
          <path d="M10 5Q12 8 10 11M12.500 3Q15.500 8 12.500 13M15 1.500Q19 8 15 14.500" stroke="#dfdbd2" strokeWidth="1.400" />
        </Svg>
        <Svg box="0 0 12 18" className="mr-3 h-[18px] w-3">
          <path d="M1 3H4V1H8V3H11V17H1Z" stroke="#dfdbd2" strokeWidth="1.600" />
          <path d="M3 6.500H9M3 9.500H9M3 12.500H9" stroke="#dfdbd2" strokeWidth="1.800" />
        </Svg>
        <svg viewBox="0 0 10 5" className="h-[5px] w-2.5" aria-hidden="true"><path d="M0 0h10L5 5Z" fill="#dfdbd2" /></svg>
      </div>
    </header>
  );
}

function Dock() {
  return (
    <nav className="flex w-[67px] shrink-0 flex-col bg-linear-to-b from-[#52373a] via-[#4b3439] to-[#413136]">
      {dockIcons.map((d) => (
        <a key={d.name} href="#app" aria-label={d.name} className="flex h-16 items-center">
          <span className={`ml-0.5 flex h-[62px] w-[62px] items-center rounded ${d.active ? "bg-[#6c585d]" : ""}`}>
            <span className={`size-1.5 shrink-0 rounded-full ${d.dot ? "bg-[#e95420]" : ""}`} />
            <span className="flex flex-1 justify-center pr-1.5">{d.art}</span>
          </span>
        </a>
      ))}
      <button type="button" aria-label="Mostra applicazioni" className="mt-auto flex h-16 items-center justify-center bg-[#3c3033]">
        <svg viewBox="0 0 30 30" className="size-[30px]" aria-hidden="true">
          {[3, 15, 27].map((y) => [3, 15, 27].map((x) => <circle key={`${x}-${y}`} cx={x} cy={y} r="3" fill="#f2f0ee" />))}
        </svg>
      </button>
    </nav>
  );
}

function TitleBar() {
  const ring = "flex size-4 items-center justify-center rounded-full border border-[#2f2e2b]";
  return (
    <div className="grid h-7 shrink-0 grid-cols-[1fr_auto_1fr] items-center bg-linear-to-b from-[#3d3c37] to-[#4a4842] pr-[5px]">
      <span />
      <h1 className="text-sm font-bold text-[#dfdbd2]">*Progetto Senza Titolo - QGIS</h1>
      <div className="flex justify-end gap-1">
        <button type="button" aria-label="Minimizza" className={`${ring} bg-[#7b7972]`}>
          <Svg box="0 0 8 8" className="size-2"><path d="M0 4.500H8" stroke="#33322f" /></Svg>
        </button>
        <button type="button" aria-label="Massimizza" className={`${ring} bg-[#7b7972]`}>
          <Svg box="0 0 8 8" className="size-2"><path d="M.5 1.500H7.500V6.500H.5Z" stroke="#33322f" /></Svg>
        </button>
        <button type="button" aria-label="Chiudi" className={`${ring} bg-[#ee6234]`}>
          <Svg box="0 0 8 8" className="size-2"><path d="M1 1 7 7M7 1 1 7" stroke="#33322f" strokeWidth="1.500" /></Svg>
        </button>
      </div>
    </div>
  );
}

/* ---------- layer panel ---------- */

const panelArt = {
  brush: (
    <g>
      <path d="M8.500 8.500 13.500 1.500 15.500 3 10.500 10Z" fill="#c98a3b" stroke="#8a5b1e" strokeWidth=".6" />
      <path d="M0.500 8 5 5.500 11.500 11.500 8 15.500Z" fill="#f3c23b" /><path d="M0.500 8 3 6.500 9 13 8 15.500Z" fill="#d9443b" /><path d="M5 5.500 7.500 5 12.500 9.500 11.500 11.500Z" fill="#f2dca0" stroke="#b08a50" strokeWidth=".5" />
      <path d="M2 9.500 6 13.500" stroke="#5b8fd0" strokeWidth="1.800" />
    </g>
  ),
  group: (
    <g>
      <path d="M6.500 5.500V2.500H14.500V12.500H12M4.500 7.500V4.500H9M1.500 13.500V7.500H5V13.500Z" stroke="#777" /><path d="M5.500 4.500h6v9h-6Z" fill="#eee" stroke="#777" />
      <path d="M8.500 1.500V10" stroke="#345" /><rect x="9.500" y="9.500" width="6" height="6" rx="1" fill="#6aa26e" /><path d="M12.500 10.500v4M10.500 12.500h4" stroke="#fff" />
    </g>
  ),
  eye: (
    <g>
      <path d="M1 8Q8 1 15 8 8 13.500 1 8Z" fill="#e8eef3" stroke="#777" /><circle cx="8" cy="7.500" r="3" fill="#5f8fc0" /><circle cx="8" cy="7.500" r="1.300" fill="#223" />
      <path d="M1 5Q7-1 14 4" stroke="#bbb" /><path d="M11 12h5l-2.500 3Z" fill="#333" />
    </g>
  ),
  filter: (
    <g><path d="M1.500 2.500H14.500L10 8.500V14.500L6 15V8.500Z" fill="#5f8fc3" stroke="#3d6692" /><path d="M1 1.500H15V4H1Z" fill="#f3d64c" stroke="#c2a20e" strokeWidth=".6" /></g>
  ),
  expr: (
    <g>
      <path d="M8.500 2.500Q6 0.500 3.500 2 1.500 4.500 5.500 5.500 1 6.500 1.500 9 3.500 12 7.500 9.500" stroke="#5b3d63" strokeWidth="1.500" />
      <path d="M8.500 8.500H15.500V15H13.500V11H10.500V15H8.500Z" fill="#d8d8d8" stroke="#999" strokeWidth=".7" />
    </g>
  ),
  expand: (
    <g><path d="M1 1.500H10M3.500 2V13.500H7" stroke="#777" /><rect x="4.500" y="4.500" width="3.500" height="3.500" stroke="#e8961e" strokeWidth="1.400" fill="#fff" /><rect x="4.500" y="10.500" width="3.500" height="3.500" stroke="#e8961e" strokeWidth="1.400" fill="#fff" /><path d="M10.500 2h3v7H16l-4 5-4-5h2.500Z" fill="#5b8bc0" stroke="#2f567f" strokeWidth=".7" /></g>
  ),
  collapse: (
    <g><path d="M1 1.500H10M3.500 2V13.500H7" stroke="#777" /><rect x="4.500" y="4.500" width="3.500" height="3.500" stroke="#e8961e" strokeWidth="1.400" fill="#fff" /><rect x="4.500" y="10.500" width="3.500" height="3.500" stroke="#e8961e" strokeWidth="1.400" fill="#fff" /><path d="M10.500 14h3V7H16l-4-5-4 5h2.500Z" fill="#5b8bc0" stroke="#2f567f" strokeWidth=".7" /></g>
  ),
  remove: (
    <g><path d="M1.500 1.500H13.500V13.500H1.500Z" fill="#eee" stroke="#777" strokeWidth="1.200" /><rect x="9" y="9.500" width="6.500" height="5.500" rx="1" fill="#dd4b4b" /><path d="M10.500 12.300h3.500" stroke="#fff" strokeWidth="1.300" /></g>
  ),
  zoom: (
    <g><path d="M1.500 2.500H8v9H1.500Z" fill="#ddd" stroke="#aaa" /><path d="M6 10 1.500 15" stroke="#333" strokeWidth="2.200" /><path d="M4.500 12 1.500 15" stroke="#e8c340" strokeWidth="1.500" /><circle cx="9.500" cy="6" r="5" fill="#eee" fillOpacity=".9" stroke="#777" /></g>
  ),
  glasses: (
    <g><path d="M0 2.500H2M14 2.500h2M7 3.500Q8 2.500 9 3.500" stroke="#111" strokeWidth="1.200" /><ellipse cx="4.200" cy="4" rx="2.700" ry="2.300" stroke="#111" strokeWidth="1.300" /><ellipse cx="11.800" cy="4" rx="2.700" ry="2.300" stroke="#111" strokeWidth="1.300" /><rect x="9.500" y="9.500" width="6" height="6" rx="1" fill="#6aa26e" /><path d="M12.500 10.500v4M10.500 12.500h4" stroke="#fff" strokeWidth="1.200" /></g>
  ),
  duplicate: (
    <g><path d="M1.500 3.500H4V13.500H12V15H3L1.500 13.500Z" fill="#777" stroke="#666" /><path d="M4.500 1.500H14.500V12.500H4.500Z" fill="#eee" stroke="#777" /><rect x="9.500" y="9.500" width="5" height="5" fill="#f3e6a0" stroke="#d6b522" strokeWidth="1.300" /></g>
  ),
  table: (
    <g><rect x="1.500" y="1.500" width="13" height="13" fill="#dfeaf5" stroke="#9cbcdc" /><rect x="1" y="1" width="14" height="4" fill="#7fadd8" /><path d="M2.500 7.500h3M6.500 7.500h3M10.500 7.500h3M2.500 10h3M6.500 10h3M10.500 10h3M2.500 12.500h3M6.500 12.500h3M10.500 12.500h3" stroke="#8aa9c8" /></g>
  ),
};

const SmallIcon = ({ art, off }) => (
  <Svg box="0 0 16 16" className={off ? "size-4 opacity-40" : "size-4"}>{panelArt[art]}</Svg>
);

function Check({ id }) {
  return (
    <span className="grid shrink-0 place-items-center">
      <input id={id} type="checkbox" defaultChecked className="peer col-start-1 row-start-1 size-3.5 appearance-none border border-[#a5a29d] bg-white" />
      <svg viewBox="0 0 12 12" className="pointer-events-none col-start-1 row-start-1 hidden size-3 peer-checked:block" fill="none" aria-hidden="true">
        <path d="M2.500 6 5 9.500 9 2" stroke="#000" strokeWidth="2" />
      </svg>
    </span>
  );
}

function LayerPanel() {
  const tool = "flex w-[25px] items-center justify-center";
  const tiny = "flex size-[11px] items-center justify-center rounded-xs border border-[#55534f]";
  return (
    <aside className="flex w-[334px] shrink-0 flex-col border-r border-[#b9b5b0]">
      <div className="flex h-5 items-center justify-between pr-px pl-1">
        <h2 className="text-sm">Layer</h2>
        <div className="flex gap-[3px]">
          <button type="button" aria-label="Sgancia" className={tiny}>
            <Svg box="0 0 8 8" className="size-2"><path d="M2.500 2.500V.5H7.500V5.500H5.500M.5 2.500H5.500V7.500H.5Z" stroke="#444" /></Svg>
          </button>
          <button type="button" aria-label="Chiudi pannello" className={tiny}>
            <Svg box="0 0 8 8" className="size-2"><path d="M1 1 7 7M7 1 1 7" stroke="#333" strokeWidth="1.800" /></Svg>
          </button>
        </div>
      </div>
      <div className="flex h-[30px] items-center pb-0.5 pl-[3px]">
        <button type="button" aria-label="Stile" className={tool}><SmallIcon art="brush" /></button>
        <button type="button" aria-label="Aggiungi gruppo" className={tool}><SmallIcon art="group" /></button>
        <button type="button" aria-label="Visibilità" className={tool}><SmallIcon art="eye" /></button>
        <button type="button" aria-label="Filtra legenda" className={tool}><SmallIcon art="filter" /></button>
        <button type="button" aria-label="Filtra per espressione" className={tool}><SmallIcon art="expr" /></button>
        <Drop name="Opzioni filtro" />
        <button type="button" aria-label="Espandi" className={tool}><SmallIcon art="expand" /></button>
        <button type="button" aria-label="Comprimi" className={tool}><SmallIcon art="collapse" /></button>
        <button type="button" aria-label="Rimuovi" className={tool}><SmallIcon art="remove" /></button>
      </div>
      <div className="flex-1 border-y border-l border-[#b9b5b0] bg-white">
        <div className="flex h-[19px] items-center bg-[#308cc6] pl-[23px]">
          <Check id="cave" />
          <span className="ml-2.5 size-2 rounded-full border border-[#2a3c4a] bg-[#7d4a55]" />
          <label htmlFor="cave" className="ml-2.5 text-sm leading-4 font-bold text-white underline underline-offset-2">cave_miniere</label>
        </div>
      </div>
    </aside>
  );
}

/* ---------- map ---------- */

// quarry positions on the canvas
const points = [
  [178,43],[177,41],[189,50],[174,59],[266,41],[338,46],[370,59],[356,72],[420,21],[431,20],[415,38],[415,48],[413,85],[413,91],
  [485,29],[537,22],[555,36],[577,34],[556,52],[580,54],[580,52],[561,70],[662,20],[663,24],[663,26],[673,26],[663,42],[638,68],[676,69],
  [366,105],[398,118],[374,133],[394,133],[351,141],[285,121],[289,128],[294,129],[294,127],[343,163],[362,162],[363,164],[395,171],
  [389,207],[402,223],[492,172],[480,187],[557,131],[554,133],[585,134],[588,142],[605,164],[631,187],[619,193],[627,195],[619,200],
  [614,203],[617,203],[615,205],[609,204],[606,210],[605,216],[596,249],[517,259],[517,262],[664,264],[667,268],[652,266],[651,269],
  [648,272],[645,275],[561,287],[561,301],[561,305],[575,312],[570,313],[629,314],[633,316],[637,320],[662,325],[665,328],[663,327],
  [456,326],[319,333],[558,371],[540,380],[667,427],[629,482],[648,494],[559,498],
];

function MapCanvas() {
  return (
    <main className="relative ml-1.5 flex-1 overflow-hidden border-t border-b border-l border-[#b9b5b0] bg-white">
      <svg className="absolute inset-0 size-full" aria-hidden="true">
        {points.map(([x, y], i) => (
          <circle key={i} cx={x} cy={y} r="3.800" fill="#b5484c" stroke="#2e2a2a" strokeWidth="1.100" />
        ))}
      </svg>
    </main>
  );
}

/* ---------- context menu ---------- */

const entries = [
  { t: "&Zoom sul Layer", icon: "zoom" },
  { t: "&Zoom alla Selezione", icon: "zoom", off: true },
  { t: "Mo&stra nella Panoramica", icon: "glasses" },
  { t: "Mostra totale elementi", check: true },
  { t: "Copia Layer" },
  { t: "Ri&nomina Layer" },
  null,
  { t: "&Duplica layer", icon: "duplicate" },
  { t: "&Rimuovi Layer...", icon: "remove" },
  null,
  { t: "&Apri tabella attributi", icon: "table" },
  { t: "&Filtro..." },
  { t: "Cambia Sorgente Dati..." },
  null,
  { t: "Impo&sta visibilità layer in base a scala..." },
  { t: "Imposta SR", sub: true },
  null,
  { t: "Esporta", sub: true, open: true },
  null,
  { t: "Stili", sub: true },
  { t: "&Proprietà..." },
];

const exportEntries = [
  { t: "Salva Elementi Come...", on: true },
  { t: "Salva Elementi Selezionati Come...", off: true },
  { t: "Salva come File di Definizione del Layer..." },
  { t: "Salva come File di Stile QGIS del Vettore..." },
];

function rowTone(active, off) {
  if (active) return "bg-[#308cc6] text-[#eef6fb] inset-ring inset-ring-[#2170a5]";
  return off ? "text-[#bebebe]" : "text-black";
}

function ContextMenu() {
  return (
    <ul role="menu" className="absolute top-[293px] left-[306px] w-[359px] bg-white text-sm shadow-[inset_0_0_0_1px_#8f8f8d,0_0_3px_rgba(0,0,0,.25)]">
      {entries.map((e, i) =>
        e === null ? (
          <li key={i} role="separator" className="mx-[5px] h-0.5 border-t border-[#bdbbb8]" />
        ) : (
          <li key={i} role="none" className="relative">
            <button
              type="button"
              role="menuitem"
              disabled={e.off}
              className={`flex h-[25px] w-full items-center pr-1.5 pl-[7px] ${rowTone(e.open, e.off)}`}
            >
              <span className="flex w-[21px] shrink-0">
                {e.icon && <SmallIcon art={e.icon} off={e.off} />}
                {e.check && <span className="ml-px size-3.5 border border-[#b5b3b0] bg-white" />}
              </span>
              <Mnemonic text={e.t} />
              {e.sub && (
                <svg viewBox="0 0 5 8" className="ml-auto h-2 w-[5px]" aria-hidden="true">
                  <path d="M0 0 5 4 0 8Z" fill={e.open ? "#c6dff0" : "#44423e"} />
                </svg>
              )}
            </button>
            {e.open && (
              <ul role="menu" className="absolute top-0 left-full -ml-px w-[343px] bg-white shadow-[inset_0_0_0_1px_#8f8f8d,0_0_3px_rgba(0,0,0,.25)]">
                {exportEntries.map((s) => (
                  <li key={s.t} role="none">
                    <button
                      type="button"
                      role="menuitem"
                      disabled={s.off}
                      className={`flex h-[25px] w-full items-center pl-7 ${rowTone(s.on, s.off)}`}
                    >
                      {s.t}
                    </button>
                  </li>
                ))}
              </ul>
            )}
          </li>
        )
      )}
    </ul>
  );
}

/* ---------- status bar ---------- */

function Spin({ id, value, className }) {
  return (
    <span className={`flex h-6 shrink-0 overflow-hidden rounded-sm border border-[#a9a6a1] bg-white ${className}`}>
      <input id={id} defaultValue={value} className="w-0 flex-1 bg-transparent pl-1 outline-none" />
      <span className="flex w-3.5 flex-col border-l border-[#bdbab5] bg-[#f3f1ee]">
        <button type="button" aria-label="Aumenta" className="flex flex-1 items-center justify-center">
          <svg viewBox="0 0 8 5" className="h-[5px] w-2" aria-hidden="true"><path d="M1 5 4 1 7 5Z" fill="#55534f" /></svg>
        </button>
        <button type="button" aria-label="Diminuisci" className="flex flex-1 items-center justify-center">
          <svg viewBox="0 0 8 5" className="h-[5px] w-2" aria-hidden="true"><path d="M1 0H7L4 4Z" fill="#55534f" /></svg>
        </button>
      </span>
    </span>
  );
}

// label squeezed by its neighbours and cut at the ends
function CutLabel({ htmlFor, children, className = "" }) {
  return (
    <label htmlFor={htmlFor} className={`flex shrink-0 overflow-hidden whitespace-nowrap ${className}`}>
      {children}
    </label>
  );
}

function StatusBar() {
  return (
    <footer className="flex h-[31px] shrink-0 items-center pr-[7px] pl-1 font-['Open_Sans',sans-serif] text-xs">
      <label className="flex h-[26px] min-w-0 flex-1 items-center rounded-sm border border-[#a9a6a1] bg-white pl-2 font-['Noto_Sans',sans-serif]">
        <Svg box="0 0 14 14" className="size-3.5"><circle cx="5.500" cy="5.500" r="4.300" stroke="#888" strokeWidth="1.200" /><path d="M8.800 8.800 12.500 12.500" stroke="#888" strokeWidth="1.200" /></Svg>
        <input aria-label="Digita per localizzare" placeholder="Digita per localizzare (Ctrl+K)" className="ml-1.5 min-w-0 flex-1 bg-transparent text-sm outline-none placeholder:text-[#888]" />
      </label>
      <span className="ml-2 w-[41px] shrink-0">Pronto</span>
      <CutLabel htmlFor="coord" className="ml-2 w-[34px] justify-center">Coordinata</CutLabel>
      <input id="coord" defaultValue="1610222,4770832" className="ml-[3px] h-6 w-[114px] shrink-0 rounded-sm border border-[#a9a6a1] bg-white text-center outline-none" />
      <button type="button" aria-label="Attiva estensioni" className="ml-[3px] shrink-0">
        <Svg box="0 0 16 16" className="size-4">
          <ellipse cx="5" cy="5" rx="2.200" ry="4" transform="rotate(-35 5 5)" fill="#ddd" stroke="#111" strokeWidth="1.200" />
          <path d="M4 9 9 4 14 10 9 15Z" fill="#fff" stroke="#222" /><circle cx="10.500" cy="11.500" r="3.200" fill="#eee" stroke="#111" strokeWidth="1.300" />
          <path d="M2 1 9 10M10 5 14 1M11 8 15 5M1 4l3 7" stroke="#111" /><circle cx="10.500" cy="11.500" r="1" fill="#111" />
        </Svg>
      </button>
      <CutLabel htmlFor="scale" className="ml-3.5 w-[9px] justify-end">Scala</CutLabel>
      <span className="relative ml-[3px] flex h-6 w-[89px] shrink-0">
        <select id="scale" className="w-full appearance-none rounded-sm border border-[#a9a6a1] bg-white pl-1 outline-none">
          <option>0:1</option>
        </select>
        <span className="pointer-events-none absolute inset-y-px right-px flex w-5 items-center justify-center border-l border-[#bdbab5] bg-[#f3f1ee]">
          <svg viewBox="0 0 8 5" className="h-[5px] w-2" aria-hidden="true"><path d="M0 0H8L4 5Z" fill="#55534f" /></svg>
        </span>
      </span>
      <button type="button" aria-label="Blocca scala" className="ml-2.5 shrink-0">
        <Svg box="0 0 16 16" className="size-4"><path d="M4.500 8V5Q4.500 1 8 1T11.500 5V8" stroke="#777" strokeWidth="1.600" /><rect x="2.500" y="7" width="11" height="8" rx="1" fill="#5b5957" /></Svg>
      </button>
      <CutLabel htmlFor="magnifier" className="ml-2 w-[98px] justify-center">Lente d'ingrandimento</CutLabel>
      <Spin id="magnifier" value="100%" className="ml-0.5 w-[97px]" />
      <CutLabel htmlFor="rotation" className="ml-2.5 w-7 justify-center">Rotazione</CutLabel>
      <Spin id="rotation" value="0,0 °" className="ml-2.5 w-[94px]" />
      <label className="ml-1.5 flex shrink-0 items-center gap-[5px]">
        <Check />
        <span className="w-[54px] whitespace-nowrap">Visualizza</span>
      </label>
      <button type="button" className="ml-[18px] flex shrink-0 items-center gap-[3px]">
        <Svg box="0 0 16 16" className="size-4"><circle cx="8" cy="7" r="6" fill="#b5b2ae" stroke="#6b6967" /><path d="M0 7H16M8 1V13M3 4H13M3 10H13M8 1Q2 7 8 13M8 1Q14 7 8 13M5 15H11" stroke="#5b5957" strokeWidth=".8" /></Svg>
        EPSG:4326
      </button>
      <button type="button" aria-label="Messaggi" className="ml-[18px] shrink-0">
        <Svg box="0 0 16 16" className="size-4"><ellipse cx="8" cy="7" rx="7.500" ry="6" fill="#5b5957" /><path d="M9 12 14 15.500 13 10Z" fill="#5b5957" /><circle cx="4.500" cy="7" r="1" fill="#fff" /><circle cx="8" cy="7" r="1" fill="#fff" /><circle cx="11.500" cy="7" r="1" fill="#fff" /></Svg>
      </button>
    </footer>
  );
}

export default function App() {
  return (
    <div className="relative flex h-screen flex-col overflow-hidden bg-[#efebe7] font-['Noto_Sans','Open_Sans',sans-serif] text-black">
      <TopBar />
      <div className="flex min-h-0 flex-1">
        <Dock />
        <div className="flex min-w-0 flex-1 flex-col">
          <TitleBar />
          <nav className="flex h-[22px] shrink-0 items-center gap-[17px] border-b border-[#d3d0cb] pl-2.5 text-sm">
            {menus.map((m) => (
              <button key={m} type="button"><Mnemonic text={m} /></button>
            ))}
          </nav>
          <Toolbar label="Progetto e navigazione" items={mainBar} />
          <Toolbar label="Sorgenti, modifica, etichette" items={editBar} />
          <Toolbar label="Raster" items={rasterBar} />
          <Toolbar label="GRASS" items={grassBar} />
          <div className="flex min-h-0 flex-1">
            <LayerPanel />
            <MapCanvas />
          </div>
          <StatusBar />
        </div>
      </div>
      <ContextMenu />
    </div>
  );
}
